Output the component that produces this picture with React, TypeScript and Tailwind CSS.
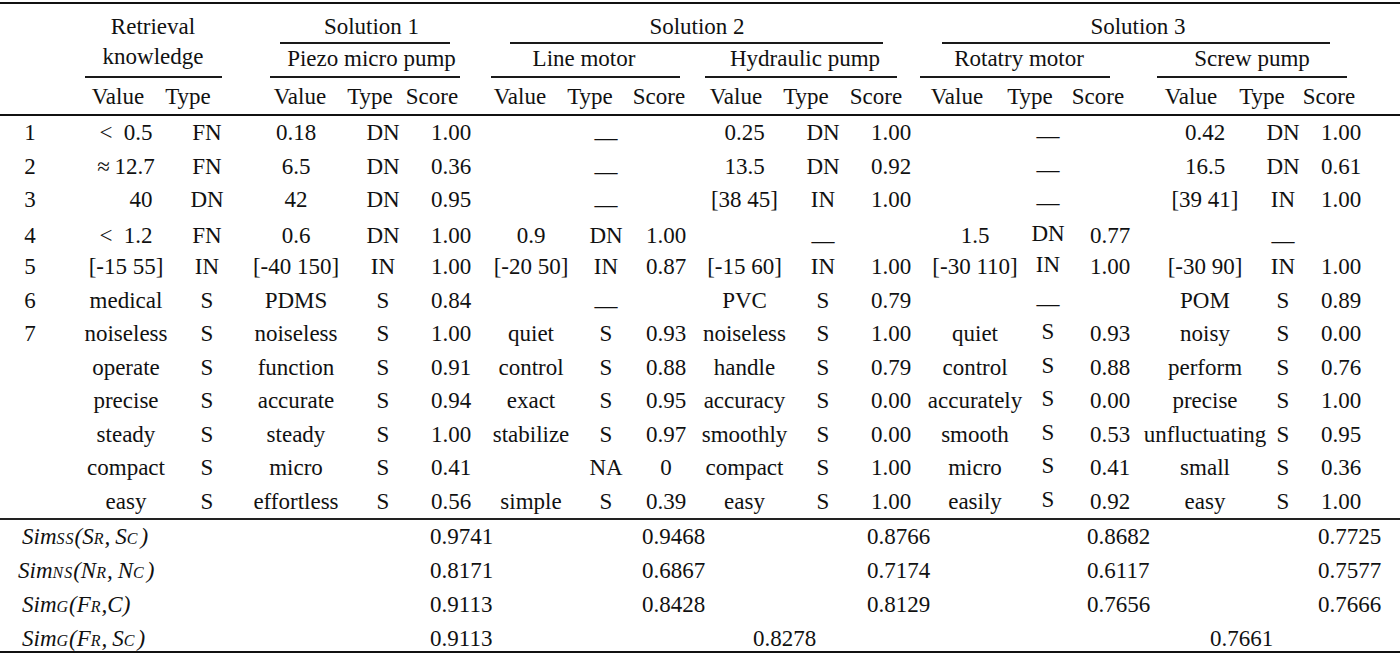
const cols =
  "grid grid-cols-[78px_88px_86px_88px_77px_74px_77px_68px_69px_79px_73px_76px_78px_68px_78px_87px_68px_58px_1fr]";

// shifts each column so its text sits where the reference has it
const colPad = [
  "pr-[18px]",
  "pl-[8px]",
  "pr-[4px]",
  "",
  "pl-[9px]",
  "pr-[6px]",
  "pl-[3px]",
  "pl-[8px]",
  "pr-[9px]",
  "",
  "pl-[5px]",
  "pr-[8px]",
  "pl-[6px]",
  "pl-[6px] -translate-y-[2px]",
  "pr-[16px]",
  "pl-[9px]",
  "pl-[10px]",
  "",
];

const headPad = [
  "",
  "pr-[8px]",
  "pr-[42px]",
  "pl-[8px]",
  "pr-[17px]",
  "pr-[44px]",
  "pr-[19px]",
  "pr-[24px]",
  "pr-[23px]",
  "pr-[17px]",
  "pr-[29px]",
  "pr-[38px]",
  "pr-[30px]",
  "pr-[30px]",
  "pr-[40px]",
  "pr-[19px]",
  "pr-[32px]",
  "pr-[24px]",
];

const subHeads = [
  "",
  "Value",
  "Type",
  "Value",
  "Type",
  "Score",
  "Value",
  "Type",
  "Score",
  "Value",
  "Type",
  "Score",
  "Value",
  "Type",
  "Score",
  "Value",
  "Type",
  "Score",
];

const rows = [
  ["1", "<\u20020.5", "FN", "0.18", "DN", "1.00", "", "—", "", "0.25", "DN", "1.00", "", "—", "", "0.42", "DN", "1.00"],
  ["2", "≈\u200912.7", "FN", "6.5", "DN", "0.36", "", "—", "", "13.5", "DN", "0.92", "", "—", "", "16.5", "DN", "0.61"],
  ["3", "40", "DN", "42", "DN", "0.95", "", "—", "", "[38 45]", "IN", "1.00", "", "—", "", "[39 41]", "IN", "1.00"],
  ["4", "<\u20021.2", "FN", "0.6", "DN", "1.00", "0.9", "DN", "1.00", "", "—", "", "1.5", "DN", "0.77", "", "—", ""],
  ["5", "[-15 55]", "IN", "[-40 150]", "IN", "1.00", "[-20 50]", "IN", "0.87", "[-15 60]", "IN", "1.00", "[-30 110]", "IN", "1.00", "[-30 90]", "IN", "1.00"],
  ["6", "medical", "S", "PDMS", "S", "0.84", "", "—", "", "PVC", "S", "0.79", "", "—", "", "POM", "S", "0.89"],
  ["7", "noiseless", "S", "noiseless", "S", "1.00", "quiet", "S", "0.93", "noiseless", "S", "1.00", "quiet", "S", "0.93", "noisy", "S", "0.00"],
  ["", "operate", "S", "function", "S", "0.91", "control", "S", "0.88", "handle", "S", "0.79", "control", "S", "0.88", "perform", "S", "0.76"],
  ["", "precise", "S", "accurate", "S", "0.94", "exact", "S", "0.95", "accuracy", "S", "0.00", "accurately", "S", "0.00", "precise", "S", "1.00"],
  ["", "steady", "S", "steady", "S", "1.00", "stabilize", "S", "0.97", "smoothly", "S", "0.00", "smooth", "S", "0.53", "unfluctuating", "S", "0.95"],
  ["", "compact", "S", "micro", "S", "0.41", "", "NA", "0", "compact", "S", "1.00", "micro", "S", "0.41", "small", "S", "0.36"],
  ["", "easy", "S", "effortless", "S", "0.56", "simple", "S", "0.39", "easy", "S", "1.00", "easily", "S", "0.92", "easy", "S", "1.00"],
];

const Sub = ({ children, extra = "" }: { children: React.ReactNode; extra?: string }) => (
  <span className={`text-[16px] tracking-[1px] ${extra}`}>{children}</span>
);

const GroupHead = ({
  label,
  place,
  textPad,
  line,
}: {
  label: string;
  place: string;
  textPad: string;
  line: string;
}) => (
  <div className={`flex flex-col ${place}`}>
    <div className={`flex flex-1 items-center justify-center whitespace-nowrap ${textPad}`}>
      {label}
    </div>
    <div className={`h-[2px] bg-[#1a1a1a] ${line}`} />
  </div>
);

export default function App() {
  return (
    <div className="h-[653px] w-[1400px] overflow-hidden bg-white [font-family:'Liberation_Serif','Times_New_Roman',serif] text-[23px] leading-none text-[#111]">
      <div className="mt-[2px] h-[2px] bg-[#111]" />

      {/* header */}
      <div className={`${cols} grid-rows-[40px_34px_36px]`}>
        <div className="col-span-2 col-start-2 row-span-2 row-start-1 flex flex-col">
          <div className="flex flex-1 flex-col items-center justify-end pr-[24px] pb-[4px] leading-[30px]">
            <span>Retrieval</span>
            <span>knowledge</span>
          </div>
          <div className="ml-[7px] mr-[30px] h-[2px] bg-[#1a1a1a]" />
        </div>

        <GroupHead label="Solution 1" place="col-span-3 col-start-4 row-start-1" textPad="pt-[6px]" line="ml-[28px] mr-[41px]" />
        <GroupHead label="Solution 2" place="col-span-6 col-start-7 row-start-1" textPad="pt-[6px] pr-[30px]" line="ml-[19px] mr-[50px]" />
        <GroupHead label="Solution 3" place="col-span-6 col-start-13 row-start-1" textPad="pt-[6px] pr-[27px]" line="ml-[9px] mr-[40px]" />

        <GroupHead label="Piezo micro pump" place="col-span-3 col-start-4 row-start-2" textPad="pb-[4px]" line="ml-[18px] mr-[31px]" />
        <GroupHead label="Line motor" place="col-span-3 col-start-7 row-start-2" textPad="pb-[4px] pr-[28px]" line="mr-[25px]" />
        <GroupHead label="Hydraulic pump" place="col-span-3 col-start-10 row-start-2" textPad="pb-[4px] pr-[28px]" line="mr-[36px]" />
        <GroupHead label="Rotatry motor" place="col-span-3 col-start-13 row-start-2" textPad="pb-[4px] pr-[52px]" line="-ml-[13px] mr-[47px]" />
        <GroupHead label="Screw pump" place="col-span-3 col-start-16 row-start-2" textPad="pb-[4px] pr-[23px]" line="mr-[23px]" />

        {subHeads.map((h, i) => (
          <div
            key={i}
            className={`row-start-3 flex items-center justify-center whitespace-nowrap ${headPad[i]}`}
          >
            {h}
          </div>
        ))}
      </div>

      <div className="h-[2px] bg-[#111]" />

      {/* body */}
      {rows.map((row, r) => (
        <div key={r} className={`${cols} h-[33.5px] ${r === 3 ? "translate-y-[2px]" : ""}`}>
          {row.map((cell, c) => (
            <div
              key={c}
              className={`flex items-center justify-center whitespace-nowrap ${colPad[c]} ${
                r === 2 && c === 1 ? "pl-[38px]" : ""
              }`}
            >
              <span className={cell === "—" ? "translate-y-[5px]" : ""}>{cell}</span>
            </div>
          ))}
        </div>
      ))}

      <div className="h-[2px] bg-[#222]" />

      {/* similarity summary */}
      <div className="grid h-[33px] grid-cols-[430px_212px_225px_220px_231px_1fr] items-center">
        <i className="whitespace-nowrap pl-[22px]">
          Sim<Sub>SS</Sub>(S<Sub>R</Sub>,<span className="ml-[5px]">S</span>
          <Sub extra="mr-[2px]">C</Sub>)
        </i>
        <span>0.9741</span>
        <span>0.9468</span>
        <span>0.8766</span>
        <span>0.8682</span>
        <span>0.7725</span>
      </div>
      <div className="grid h-[34px] grid-cols-[430px_212px_225px_220px_231px_1fr] items-center">
        <i className="whitespace-nowrap pl-[18px]">
          Sim<Sub>NS</Sub>(N<Sub>R</Sub>,<span className="ml-[5px]">N</span>
          <Sub extra="mr-[2px]">C</Sub>)
        </i>
        <span>0.8171</span>
        <span>0.6867</span>
        <span>0.7174</span>
        <span>0.6117</span>
        <span>0.7577</span>
      </div>
      <div className="grid h-[34px] grid-cols-[430px_212px_225px_220px_231px_1fr] items-center">
        <i className="whitespace-nowrap pl-[22px]">
          Sim<Sub>G</Sub>(F<Sub>R</Sub>,C)
        </i>
        <span>0.9113</span>
        <span>0.8428</span>
        <span>0.8129</span>
        <span>0.7656</span>
        <span>0.7666</span>
      </div>
      <div className="grid h-[30px] grid-cols-[430px_323px_457px_1fr] items-center pt-[4px]">
        <i className="whitespace-nowrap pl-[22px]">
          Sim<Sub>G</Sub>(F<Sub>R</Sub>,<span className="ml-[5px]">S</span>
          <Sub extra="mr-[2px]">C</Sub>)
        </i>
        <span>0.9113</span>
        <span>0.8278</span>
        <span>0.7661</span>
      </div>

      <div className="h-[2px] bg-[#111]" />
    </div>
  );
}
